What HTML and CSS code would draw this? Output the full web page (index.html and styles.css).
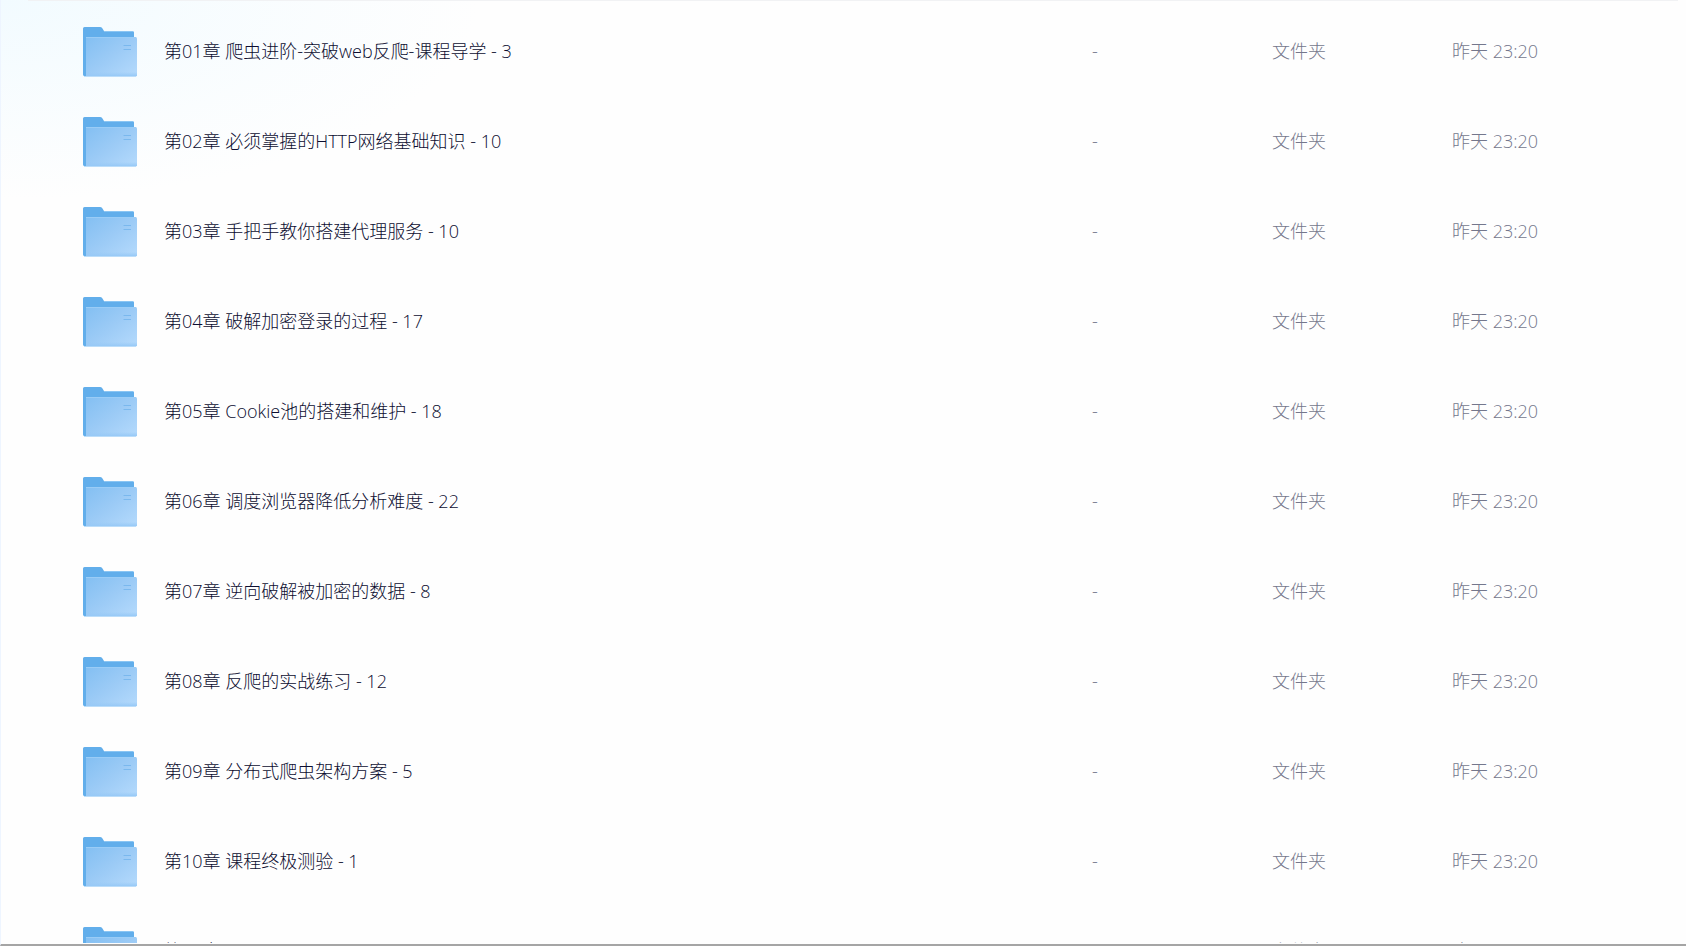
FILE: index.html
```html
<!DOCTYPE html>
<html lang="zh-CN">
<head>
    <meta charset="UTF-8">
    <meta name="viewport" content="width=device-width, initial-scale=1.0">
    <title>课程文件</title>
    <link rel="stylesheet" href="styles.css">
</head>
<body>
    <!-- Icono de carpeta compartido -->
    <svg class="sprite" aria-hidden="true">
        <defs>
            <linearGradient id="front" x1="0" y1="0" x2="1" y2="1">
                <stop offset="0" stop-color="#83bff2"/>
                <stop offset="0.5" stop-color="#9ccbf6"/>
                <stop offset="1" stop-color="#b5dafc"/>
            </linearGradient>
            <linearGradient id="edge" x1="0" y1="0" x2="0" y2="1">
                <stop offset="0" stop-color="#97c9f6" stop-opacity="0"/>
                <stop offset="1" stop-color="#97c9f6"/>
            </linearGradient>
        </defs>
        <symbol id="folder" viewBox="0 0 54 50">
            <path d="M0 1.5Q0 0 1.5 0H17Q18.500 0 19.300 1.300L21 4H49.500Q51 4 51 5.500V20H5V49H1.500Q0 49 0 47.500Z" fill="#62aeeb"/>
            <path d="M21 4.500H50" stroke="#8ac5f3" fill="none"/>
            <path d="M3 10H52.500Q54 10 54 11.500V48Q54 49.500 52.500 49.500H3Z" fill="url(#front)"/>
            <path d="M3 45H54V49H3Z" fill="url(#edge)"/>
            <path d="M3 10.500H53" stroke="#9accf6" fill="none"/>
            <path d="M1 49.500H53" stroke="#bbddfa" fill="none"/>
            <path d="M40.500 18.500H48M40.500 22.500H48" stroke="#7ab8ee" fill="none"/>
        </symbol>
    </svg>
    <main class="lista">
        <table class="archivos">
            <colgroup>
                <col>
                <col class="col-dato">
                <col class="col-dato">
                <col class="col-fecha">
            </colgroup>
            <tbody>
                <tr>
                    <td><a class="nombre" href="#"><svg class="carpeta"><use href="#folder"/></svg>第01章 爬虫进阶-突破web反爬-课程导学 - 3</a></td>
                    <td>-</td>
                    <td>文件夹</td>
                    <td>昨天 23:20</td>
                </tr>
                <tr>
                    <td><a class="nombre" href="#"><svg class="carpeta"><use href="#folder"/></svg>第02章 必须掌握的HTTP网络基础知识 - 10</a></td>
                    <td>-</td>
                    <td>文件夹</td>
                    <td>昨天 23:20</td>
                </tr>
                <tr>
                    <td><a class="nombre" href="#"><svg class="carpeta"><use href="#folder"/></svg>第03章 手把手教你搭建代理服务 - 10</a></td>
                    <td>-</td>
                    <td>文件夹</td>
                    <td>昨天 23:20</td>
                </tr>
                <tr>
                    <td><a class="nombre" href="#"><svg class="carpeta"><use href="#folder"/></svg>第04章 破解加密登录的过程 - 17</a></td>
                    <td>-</td>
                    <td>文件夹</td>
                    <td>昨天 23:20</td>
                </tr>
                <tr>
                    <td><a class="nombre" href="#"><svg class="carpeta"><use href="#folder"/></svg>第05章 Cookie池的搭建和维护 - 18</a></td>
                    <td>-</td>
                    <td>文件夹</td>
                    <td>昨天 23:20</td>
                </tr>
                <tr>
                    <td><a class="nombre" href="#"><svg class="carpeta"><use href="#folder"/></svg>第06章 调度浏览器降低分析难度 - 22</a></td>
                    <td>-</td>
                    <td>文件夹</td>
                    <td>昨天 23:20</td>
                </tr>
                <tr>
                    <td><a class="nombre" href="#"><svg class="carpeta"><use href="#folder"/></svg>第07章 逆向破解被加密的数据 - 8</a></td>
                    <td>-</td>
                    <td>文件夹</td>
                    <td>昨天 23:20</td>
                </tr>
                <tr>
                    <td><a class="nombre" href="#"><svg class="carpeta"><use href="#folder"/></svg>第08章 反爬的实战练习 - 12</a></td>
                    <td>-</td>
                    <td>文件夹</td>
                    <td>昨天 23:20</td>
                </tr>
                <tr>
                    <td><a class="nombre" href="#"><svg class="carpeta"><use href="#folder"/></svg>第09章 分布式爬虫架构方案 - 5</a></td>
                    <td>-</td>
                    <td>文件夹</td>
                    <td>昨天 23:20</td>
                </tr>
                <tr>
                    <td><a class="nombre" href="#"><svg class="carpeta"><use href="#folder"/></svg>第10章 课程终极测验 - 1</a></td>
                    <td>-</td>
                    <td>文件夹</td>
                    <td>昨天 23:20</td>
                </tr>
                <tr>
                    <td><a class="nombre" href="#"><svg class="carpeta"><use href="#folder"/></svg>第11章</a></td>
                    <td>-</td>
                    <td>文件夹</td>
                    <td>昨天 23:20</td>
                </tr>
            </tbody>
        </table>
    </main>
</body>
</html>
```
FILE: styles.css
```css
* {
    box-sizing: border-box;
}
body {
    margin: 0;
    height: 100vh;
    display: flex;
    flex-direction: column;
    overflow: hidden;
    font-family: "Open Sans", "Noto Sans CJK SC", sans-serif;
    font-size: 18px;
    font-weight: 300;
    line-height: 24px;
    color: #0c0d30;
    background: radial-gradient(ellipse 480px 200px at 0 0, #f2fbff, #fefefe);
    border-left: 1px solid #eef5ff;
    border-bottom: 2px solid #a5a5a5;
}
.sprite {
    position: absolute;
    width: 0;
    height: 0;
}
.lista {
    flex: 1;
    min-height: 0;
    overflow: hidden;
    margin: 0 8px 1px 27px;
    border-top: 1px solid #f1f2f4;
    padding-top: 6px;
}
.archivos {
    width: 100%;
    table-layout: fixed;
    border-collapse: collapse;
}
.archivos td {
    height: 90px;
    padding: 0 0 2px;
    color: #74778c;
    white-space: nowrap;
}
.col-dato {
    width: 180px;
}
.col-fecha {
    width: 226px;
}
.nombre {
    display: flex;
    align-items: center;
    gap: 27px;
    padding-left: 55px;
    color: #0c0d30;
    text-decoration: none;
}
.nombre:hover {
    color: #06a7ff;
}
.carpeta {
    width: 54px;
    height: 50px;
    margin-top: 2px;
    flex-shrink: 0;
}
```
